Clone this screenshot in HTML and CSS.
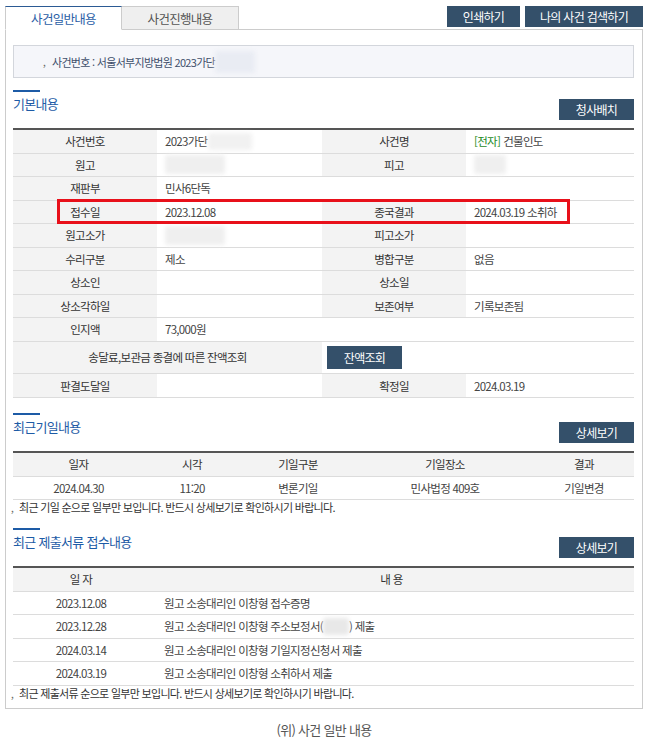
FILE: index.html
```html
<!DOCTYPE html>
<html lang="ko">
<head>
<meta charset="utf-8">
<title>사건일반내용</title>
<link rel="stylesheet" href="styles.css">
</head>
<body>
<div class="page">
  <div class="topbar">
    <div class="tabs">
      <a class="tab tab-active">사건일반내용</a>
      <a class="tab">사건진행내용</a>
    </div>
    <div class="actions">
      <button class="btn btn-print">인쇄하기</button>
      <button class="btn btn-search">나의 사건 검색하기</button>
    </div>
  </div>

  <div class="panel">
    <div class="casebox"><span class="mark">,</span>사건번호 : 서울서부지방법원 2023가단<span class="blur blur-case"></span></div>

    <div class="sec-head">
      <h3 class="sec-title">기본내용</h3>
      <button class="btn btn-small">청사배치</button>
    </div>
    <div class="info-wrap">
      <div class="info">
        <div class="lbl">사건번호</div><div class="val">2023가단<span class="blur blur-num"></span></div>
        <div class="lbl">사건명</div><div class="val"><span class="tag">[전자]</span> 건물인도</div>

        <div class="lbl">원고</div><div class="val"><span class="blur blur-name"></span></div>
        <div class="lbl">피고</div><div class="val"><span class="blur blur-def"></span></div>

        <div class="lbl">재판부</div><div class="val span3">민사6단독</div>

        <div class="lbl">접수일</div><div class="val">2023.12.08</div>
        <div class="lbl">종국결과</div><div class="val">2024.03.19 소취하</div>

        <div class="lbl">원고소가</div><div class="val"><span class="blur blur-name"></span></div>
        <div class="lbl">피고소가</div><div class="val"></div>

        <div class="lbl">수리구분</div><div class="val">제소</div>
        <div class="lbl">병합구분</div><div class="val">없음</div>

        <div class="lbl">상소인</div><div class="val"></div>
        <div class="lbl">상소일</div><div class="val"></div>

        <div class="lbl">상소각하일</div><div class="val"></div>
        <div class="lbl">보존여부</div><div class="val">기록보존됨</div>

        <div class="lbl">인지액</div><div class="val span3">73,000원</div>

        <div class="lbl span2">송달료,보관금 종결에 따른 잔액조회</div>
        <div class="val span2 btn-cell"><button class="btn btn-balance">잔액조회</button></div>

        <div class="lbl">판결도달일</div><div class="val"></div>
        <div class="lbl">확정일</div><div class="val">2024.03.19</div>
      </div>
      <div class="highlight"></div>
    </div>

    <div class="sec-head sec-next">
      <h3 class="sec-title">최근기일내용</h3>
      <button class="btn btn-small">상세보기</button>
    </div>
    <div class="list hearings">
      <div class="th">일자</div><div class="th">시각</div><div class="th">기일구분</div><div class="th">기일장소</div><div class="th">결과</div>
      <div class="td">2024.04.30</div><div class="td">11:20</div><div class="td">변론기일</div><div class="td">민사법정 409호</div><div class="td">기일변경</div>
    </div>
    <p class="note"><span class="mark">,</span>최근 기일 순으로 일부만 보입니다. 반드시 상세보기로 확인하시기 바랍니다.</p>

    <div class="sec-head sec-last">
      <h3 class="sec-title">최근 제출서류 접수내용</h3>
      <button class="btn btn-small">상세보기</button>
    </div>
    <div class="list docs">
      <div class="th">일 자</div><div class="th">내 용</div>
      <div class="td">2023.12.08</div><div class="td left">원고 소송대리인 이창형 접수증명</div>
      <div class="td">2023.12.28</div><div class="td left">원고 소송대리인 이창형 주소보정서(<span class="blur blur-doc"></span>) 제출</div>
      <div class="td">2024.03.14</div><div class="td left">원고 소송대리인 이창형 기일지정신청서 제출</div>
      <div class="td">2024.03.19</div><div class="td left">원고 소송대리인 이창형 소취하서 제출</div>
    </div>
    <p class="note"><span class="mark">,</span>최근 제출서류 순으로 일부만 보입니다. 반드시 상세보기로 확인하시기 바랍니다.</p>
  </div>

  <p class="caption">(위) 사건 일반 내용</p>
</div>
</body>
</html>
```

FILE: styles.css
```css
* { box-sizing: border-box; }

html, body {
  margin: 0;
  padding: 0;
  background: #fff;
}

body {
  font-family: "Noto Sans CJK KR", "Noto Sans", sans-serif;
  font-size: 11.5px;
  letter-spacing: -0.7px;
  color: #444;
}

.page {
  width: 649px;
  padding: 6px 6px 0 5px;
}

/* top bar */
.topbar {
  display: flex;
  justify-content: space-between;
  align-items: flex-start;
  margin-bottom: -1px;
}

.tabs {
  display: flex;
}

.tab {
  position: relative;
  z-index: 1;
  display: flex;
  align-items: center;
  justify-content: center;
  width: 117px;
  height: 24px;
  font-size: 12.5px;
  color: #555;
  background: #efefef;
  border: 1px solid #ccc;
  border-left: none;
}

.tab-active {
  color: #2b5ea6;
  background: #fff;
  border-left: 1px solid #ccc;
  border-top: 1px solid #2b5a94;
  border-bottom-color: #fff;
}

.actions {
  display: flex;
  gap: 5px;
}

.btn {
  display: inline-flex;
  align-items: center;
  justify-content: center;
  height: 21px;
  padding: 0;
  border: none;
  background: #34506a;
  color: #fff;
  font-family: inherit;
  font-size: 12px;
  letter-spacing: -0.7px;
}

.btn-print { width: 73px; }
.btn-search { width: 118px; }
.btn-small { width: 75px; margin-top: 9px; }
.btn-balance { width: 75px; height: 23px; }

/* panel */
.panel {
  border: 1px solid #ccc;
  padding: 15px 8px 8px 7px;
}

.casebox {
  display: flex;
  align-items: center;
  height: 33px;
  padding-left: 29px;
  background: #f5f6fa;
  border: 1px solid #d3d6dc;
  color: #3f4f6b;
  font-size: 11px;
}

.mark {
  display: inline-block;
  width: 9px;
  color: #666;
  font-size: 10px;
}

.blur {
  display: inline-block;
  vertical-align: middle;
  background: #eeeeee;
  border-radius: 3px;
  filter: blur(2px);
}

.blur-case { width: 40px; height: 22px; background: #e9ecf3; }
.blur-num { width: 44px; height: 17px; background: #f1f1f1; }
.blur-name { width: 60px; height: 19px; background: #efefef; }
.blur-def { width: 32px; height: 19px; background: #efefef; }
.blur-doc { width: 26px; height: 17px; background: #e8e8e8; }

/* section heads */
.sec-head {
  display: flex;
  justify-content: space-between;
  align-items: flex-start;
  margin-top: 12px;
  margin-bottom: 8px;
}

.sec-next { margin-top: 15px; }
.sec-last { margin-top: 14px; }

.sec-title {
  margin: 0;
  font-size: 13px;
  font-weight: normal;
  line-height: 18px;
  color: #1d5ba6;
}

.sec-title::before {
  content: "";
  display: block;
  width: 27px;
  height: 2px;
  margin-bottom: 3px;
  background: #1d5ba6;
}

/* info grid */
.info-wrap {
  position: relative;
}

.info {
  display: grid;
  grid-template-columns: 144px 165px 144px 168px;
  grid-template-rows: repeat(9, 23.5px) 32.5px 24px;
  border-top: 2px solid #555;
}

.lbl, .val {
  display: flex;
  align-items: center;
  border-bottom: 1px solid #dcdcdc;
}

.lbl {
  justify-content: center;
  background: #f3f3f3;
  color: #333;
}

.val {
  padding-left: 8px;
  background: #fff;
  color: #444;
}

.span2 { grid-column: span 2; }
.span3 { grid-column: span 3; }

.btn-cell { padding-left: 5px; }

.tag { color: #1e8b1e; margin-right: 3px; }

.highlight {
  position: absolute;
  left: 44px;
  top: 71px;
  width: 513px;
  height: 25px;
  border: 3px solid #e8101a;
}

/* lists */
.list {
  display: grid;
  grid-auto-rows: 23.5px;
  border-top: 2px solid #555;
}

.hearings { grid-template-columns: 131px 96px 116px 178px 100px; }
.docs { grid-template-columns: 136px 485px; }

.th, .td {
  display: flex;
  align-items: center;
  justify-content: center;
  border-bottom: 1px solid #dcdcdc;
}

.th {
  background: #f3f3f3;
  color: #333;
}

.td { color: #444; }

.td.left {
  justify-content: flex-start;
  padding-left: 15px;
}

.note {
  margin: 0;
  height: 14px;
  line-height: 14px;
  font-size: 11px;
  color: #333;
}

.note .mark { margin-left: -2px; width: 8px; }

.caption {
  margin: 13px 0 0;
  text-align: center;
  font-size: 13px;
  color: #555;
  line-height: 16px;
}
```
